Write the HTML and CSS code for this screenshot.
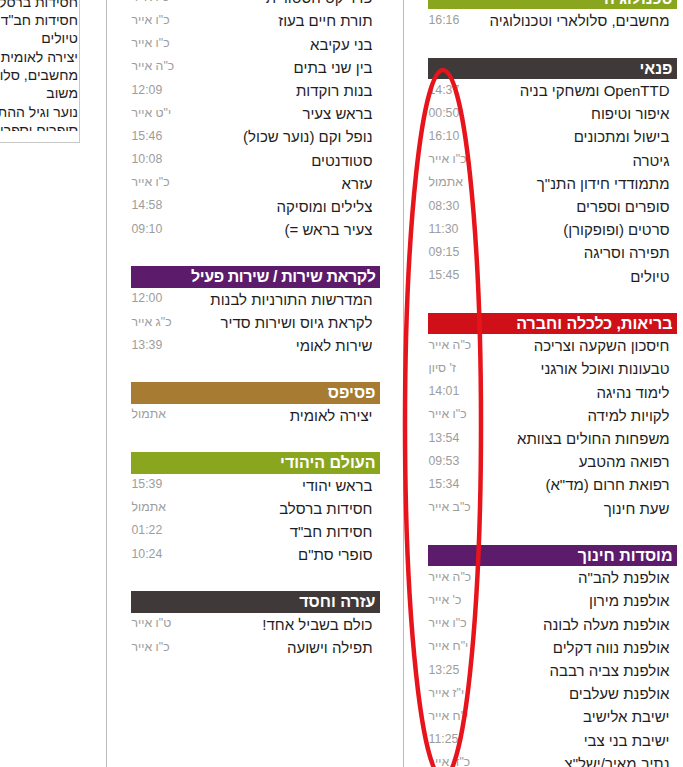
FILE: index.html
```html
<!DOCTYPE html>
<html lang="he">
<head>
<meta charset="utf-8">
<title>פורומים</title>
<link rel="stylesheet" href="styles.css">
</head>
<body>
<div class="page">
  <div class="side">
    <div class="side-box">
      <div class="side-list">
        <div class="side-inner">
          <div class="side-line">חסידות ברסלב</div>
          <div class="side-line">חסידות חב"ד</div>
          <div class="side-line">טיולים</div>
          <div class="side-line">יצירה לאומית</div>
          <div class="side-line">מחשבים, סלולארי וטכנולוגיה</div>
          <div class="side-line">משוב</div>
          <div class="side-line">נוער וגיל ההתבגרות</div>
          <div class="side-line">סופרים וספרים</div>
        </div>
      </div>
    </div>
  </div>

  <div class="col col-mid">
    <div class="col-inner">
      <div class="section">
        <div class="row"><span class="n">פרוייקט הסטורית</span><span class="t">כ"ו אייר</span></div>
        <div class="row"><span class="n">תורת חיים בעוז</span><span class="t">כ"ו אייר</span></div>
        <div class="row"><span class="n">בני עקיבא</span><span class="t">כ"ו אייר</span></div>
        <div class="row"><span class="n">בין שני בתים</span><span class="t">כ"ה אייר</span></div>
        <div class="row"><span class="n">בנות רוקדות</span><span class="t">12:09</span></div>
        <div class="row"><span class="n">בראש צעיר</span><span class="t">י"ט אייר</span></div>
        <div class="row"><span class="n">נופל וקם (נוער שכול)</span><span class="t">15:46</span></div>
        <div class="row"><span class="n">סטודנטים</span><span class="t">10:08</span></div>
        <div class="row"><span class="n">עזרא</span><span class="t">כ"ו אייר</span></div>
        <div class="row"><span class="n">צלילים ומוסיקה</span><span class="t">14:58</span></div>
        <div class="row"><span class="n">צעיר בראש =)</span><span class="t">09:10</span></div>
      </div>
      <div class="section">
        <div class="sec-head purple tight">לקראת שירות / שירות פעיל</div>
        <div class="row"><span class="n">המדרשות התורניות לבנות</span><span class="t">12:00</span></div>
        <div class="row"><span class="n">לקראת גיוס ושירות סדיר</span><span class="t">כ"ג אייר</span></div>
        <div class="row"><span class="n">שירות לאומי</span><span class="t">13:39</span></div>
      </div>
      <div class="section">
        <div class="sec-head brown">פסיפס</div>
        <div class="row"><span class="n">יצירה לאומית</span><span class="t">אתמול</span></div>
      </div>
      <div class="section">
        <div class="sec-head green">העולם היהודי</div>
        <div class="row"><span class="n">בראש יהודי</span><span class="t">15:39</span></div>
        <div class="row"><span class="n">חסידות ברסלב</span><span class="t">אתמול</span></div>
        <div class="row"><span class="n">חסידות חב"ד</span><span class="t">01:22</span></div>
        <div class="row"><span class="n">סופרי סת"ם</span><span class="t">10:24</span></div>
      </div>
      <div class="section">
        <div class="sec-head dark">עזרה וחסד</div>
        <div class="row"><span class="n">כולם בשביל אחד!</span><span class="t">ט"ו אייר</span></div>
        <div class="row"><span class="n">תפילה וישועה</span><span class="t">כ"ו אייר</span></div>
      </div>
    </div>
  </div>

  <div class="col col-right">
    <div class="col-inner">
      <div class="section">
        <div class="sec-head green">טכנולוגיה</div>
        <div class="row"><span class="n">מחשבים, סלולארי וטכנולוגיה</span><span class="t">16:16</span></div>
      </div>
      <div class="section">
        <div class="sec-head dark">פנאי</div>
        <div class="row"><span class="n">OpenTTD ומשחקי בניה</span><span class="t">14:37</span></div>
        <div class="row"><span class="n">איפור וטיפוח</span><span class="t">00:50</span></div>
        <div class="row"><span class="n">בישול ומתכונים</span><span class="t">16:10</span></div>
        <div class="row"><span class="n">גיטרה</span><span class="t">כ"ו אייר</span></div>
        <div class="row"><span class="n">מתמודדי חידון התנ"ך</span><span class="t">אתמול</span></div>
        <div class="row"><span class="n">סופרים וספרים</span><span class="t">08:30</span></div>
        <div class="row"><span class="n">סרטים (ופופקורן)</span><span class="t">11:30</span></div>
        <div class="row"><span class="n">תפירה וסריגה</span><span class="t">09:15</span></div>
        <div class="row"><span class="n">טיולים</span><span class="t">15:45</span></div>
      </div>
      <div class="section">
        <div class="sec-head red">בריאות, כלכלה וחברה</div>
        <div class="row"><span class="n">חיסכון השקעה וצריכה</span><span class="t">כ"ה אייר</span></div>
        <div class="row"><span class="n">טבעונות ואוכל אורגני</span><span class="t">ז' סיון</span></div>
        <div class="row"><span class="n">לימוד נהיגה</span><span class="t">14:01</span></div>
        <div class="row"><span class="n">לקויות למידה</span><span class="t">כ"ו אייר</span></div>
        <div class="row"><span class="n">משפחות החולים בצוותא</span><span class="t">13:54</span></div>
        <div class="row"><span class="n">רפואה מהטבע</span><span class="t">09:53</span></div>
        <div class="row"><span class="n">רפואת חרום (מד"א)</span><span class="t">15:34</span></div>
        <div class="row"><span class="n">שעת חינוך</span><span class="t">כ"ב אייר</span></div>
      </div>
      <div class="section">
        <div class="sec-head purple">מוסדות חינוך</div>
        <div class="row"><span class="n">אולפנת להב"ה</span><span class="t">כ"ה אייר</span></div>
        <div class="row"><span class="n">אולפנת מירון</span><span class="t">כ' אייר</span></div>
        <div class="row"><span class="n">אולפנת מעלה לבונה</span><span class="t">כ"ו אייר</span></div>
        <div class="row"><span class="n">אולפנת נווה דקלים</span><span class="t">י"ח אייר</span></div>
        <div class="row"><span class="n">אולפנת צביה רבבה</span><span class="t">13:25</span></div>
        <div class="row"><span class="n">אולפנת שעלבים</span><span class="t">י"ז אייר</span></div>
        <div class="row"><span class="n">ישיבת אלישיב</span><span class="t">י"ח אייר</span></div>
        <div class="row"><span class="n">ישיבת בני צבי</span><span class="t">11:25</span></div>
        <div class="row"><span class="n">נתיב מאיר/ישל"צ</span><span class="t">כ"ד אייר</span></div>
      </div>
    </div>
  </div>
</div>

<svg class="mark" width="683" height="767" viewBox="0 0 683 767">
  <ellipse cx="443" cy="424" rx="38" ry="354" fill="none" stroke="#e8141c" stroke-width="4.5"/>
</svg>
</body>
</html>
```

FILE: styles.css
```css
html, body {
  margin: 0;
  padding: 0;
  overflow: hidden;
  background: #fff;
}

body {
  font-family: "Liberation Sans", Arial, sans-serif;
  font-size: 14px;
  color: #1e1e1e;
  width: 683px;
  height: 767px;
  position: relative;
}

.page {
  display: flex;
  width: 700px;
  height: 767px;
}

.side {
  width: 106px;
  flex: none;
}

.side-box {
  width: 80px;
  height: 143px;
  box-sizing: border-box;
  border-right: 1px solid #c8c8c8;
  border-bottom: 1px solid #c8c8c8;
  padding-bottom: 11px;
  direction: rtl;
}

.side-list {
  height: 100%;
  overflow: hidden;
}

.side-inner {
  margin-top: -7.5px;
  padding-right: 1px;
}

.side-line {
  height: 18.4px;
  line-height: 18.4px;
  white-space: nowrap;
  text-align: right;
}

.col {
  width: 296px;
  flex: none;
  height: 767px;
  border-left: 1px solid #bbb;
  overflow: hidden;
}

.col-inner {
  width: 249px;
  margin: 0 auto;
  direction: rtl;
}

.col-mid .col-inner {
  margin-top: -13.8px;
}

.col-right .col-inner {
  margin-top: -12.2px;
}

.section + .section {
  margin-top: 25px;
}

.sec-head {
  height: 21.5px;
  line-height: 21.5px;
  padding-right: 4px;
  color: #fff;
  font-weight: bold;
  font-size: 16px;
  white-space: nowrap;
}

.sec-head.tight {
  letter-spacing: -0.4px;
}

.green { background: #8aa61f; }
.dark { background: #3f3a39; }
.red { background: #cf1019; }
.purple { background: #5d1b6c; }
.brown { background: #a77b31; }

.row {
  display: flex;
  justify-content: space-between;
  align-items: center;
  height: 23.2px;
  padding-right: 7px;
  padding-left: 1px;
  white-space: nowrap;
  font-size: 15px;
}

.n {
  color: #1e1e1e;
}

.t {
  color: #9d9d9d;
  font-size: 12.3px;
  position: relative;
  top: -1px;
}

.mark {
  position: absolute;
  left: 0;
  top: 0;
  pointer-events: none;
}
```
